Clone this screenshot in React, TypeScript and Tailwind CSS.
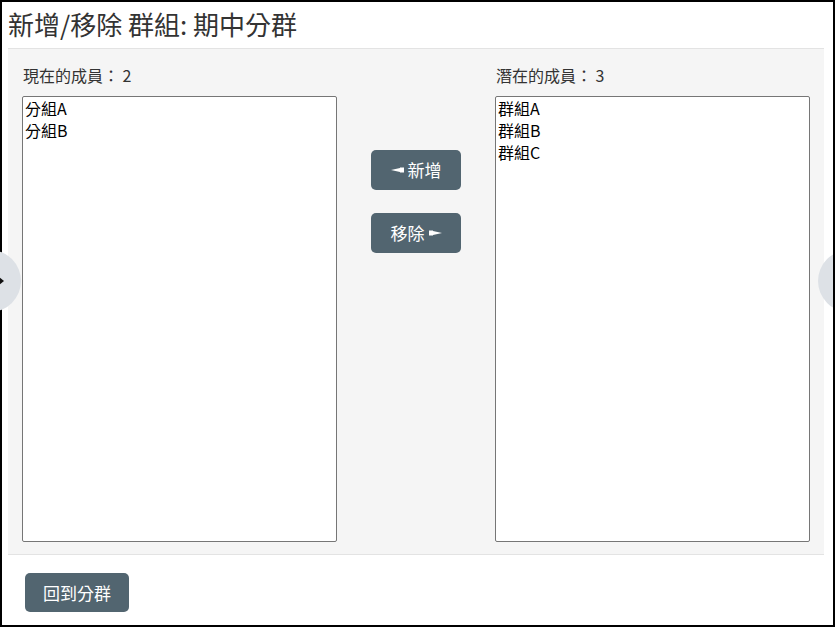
import React from "react";

const font = { fontFamily: '"Noto Sans CJK TC", "Noto Sans", sans-serif' };

function LeftArrow() {
  return (
    <svg width="13" height="6" viewBox="0 0 13 6" className="inline-block">
      <polygon points="0,3 9,1 9,0.5 13,0.5 13,5.5 9,5.5 9,5" fill="white" />
    </svg>
  );
}

function RightArrow() {
  return (
    <svg width="13" height="6" viewBox="0 0 13 6" className="inline-block">
      <polygon points="13,3 4,1 4,0.5 0,0.5 0,5.5 4,5.5 4,5" fill="white" />
    </svg>
  );
}

export default function App() {
  const left = ["分組A", "分組B"];
  const right = ["群組A", "群組B", "群組C"];
  return (
    <div className="relative w-[835px] h-[627px] overflow-hidden" style={font}>
      <div className="relative w-[835px] h-[627px] overflow-hidden bg-white border-2 border-black text-[#333]">
        <div className="h-[46px] pl-[6px] flex items-center">
          <h1 className="text-[26px] leading-none text-[#333] -mt-[3px]">新增/移除 群組: 期中分群</h1>
        </div>
        <div className="ml-[6px] w-[816px] h-[507px] bg-[#f5f5f5] border-y border-[#e3e3e3] pl-[14px] pr-[14px] pt-[14px] pb-[12px] flex">
          <div className="flex flex-col w-[315px]">
            <div className="h-[33px] text-[16px] leading-[24px] text-[#333] pl-[1px]">現在的成員： 2</div>
            <div className="flex-1 bg-white border border-[#767676] rounded-[2px] px-[2px] text-[16px] leading-[22px] text-black">
              {left.map((t) => (
                <div key={t}>{t}</div>
              ))}
            </div>
          </div>
          <div className="w-[158px] flex flex-col items-center pt-[87px] gap-[23px]">
            <button className="w-[90px] h-[40px] rounded-[5px] bg-[#526570] text-white text-[17px] flex items-center justify-center gap-[4px]">
              <LeftArrow />
              <span>新增</span>
            </button>
            <button className="w-[90px] h-[40px] rounded-[5px] bg-[#526570] text-white text-[17px] flex items-center justify-center gap-[4px]">
              <span>移除</span>
              <RightArrow />
            </button>
          </div>
          <div className="flex flex-col w-[315px]">
            <div className="h-[33px] text-[16px] leading-[24px] text-[#333] pl-[1px]">潛在的成員： 3</div>
            <div className="flex-1 bg-white border border-[#767676] rounded-[2px] px-[2px] text-[16px] leading-[22px] text-black">
              {right.map((t) => (
                <div key={t}>{t}</div>
              ))}
            </div>
          </div>
        </div>
        <div className="pl-[23px] pt-[18px]">
          <button className="w-[104px] h-[39px] rounded-[5px] bg-[#526570] text-white text-[17px] flex items-center justify-center">
            回到分群
          </button>
        </div>
        <div className="absolute right-[-47px] top-[248px] w-[62px] h-[62px] rounded-full bg-[#dde1e6]" />
      </div>
      <div className="absolute left-[-41px] top-[250px] w-[62px] h-[62px] rounded-full bg-[#dde1e6]">
        <svg width="6" height="8" viewBox="0 0 6 8" className="absolute left-[40px] top-[27px]">
          <polygon points="0,0 5,4 0,8" fill="#111" />
        </svg>
      </div>
    </div>
  );
}
